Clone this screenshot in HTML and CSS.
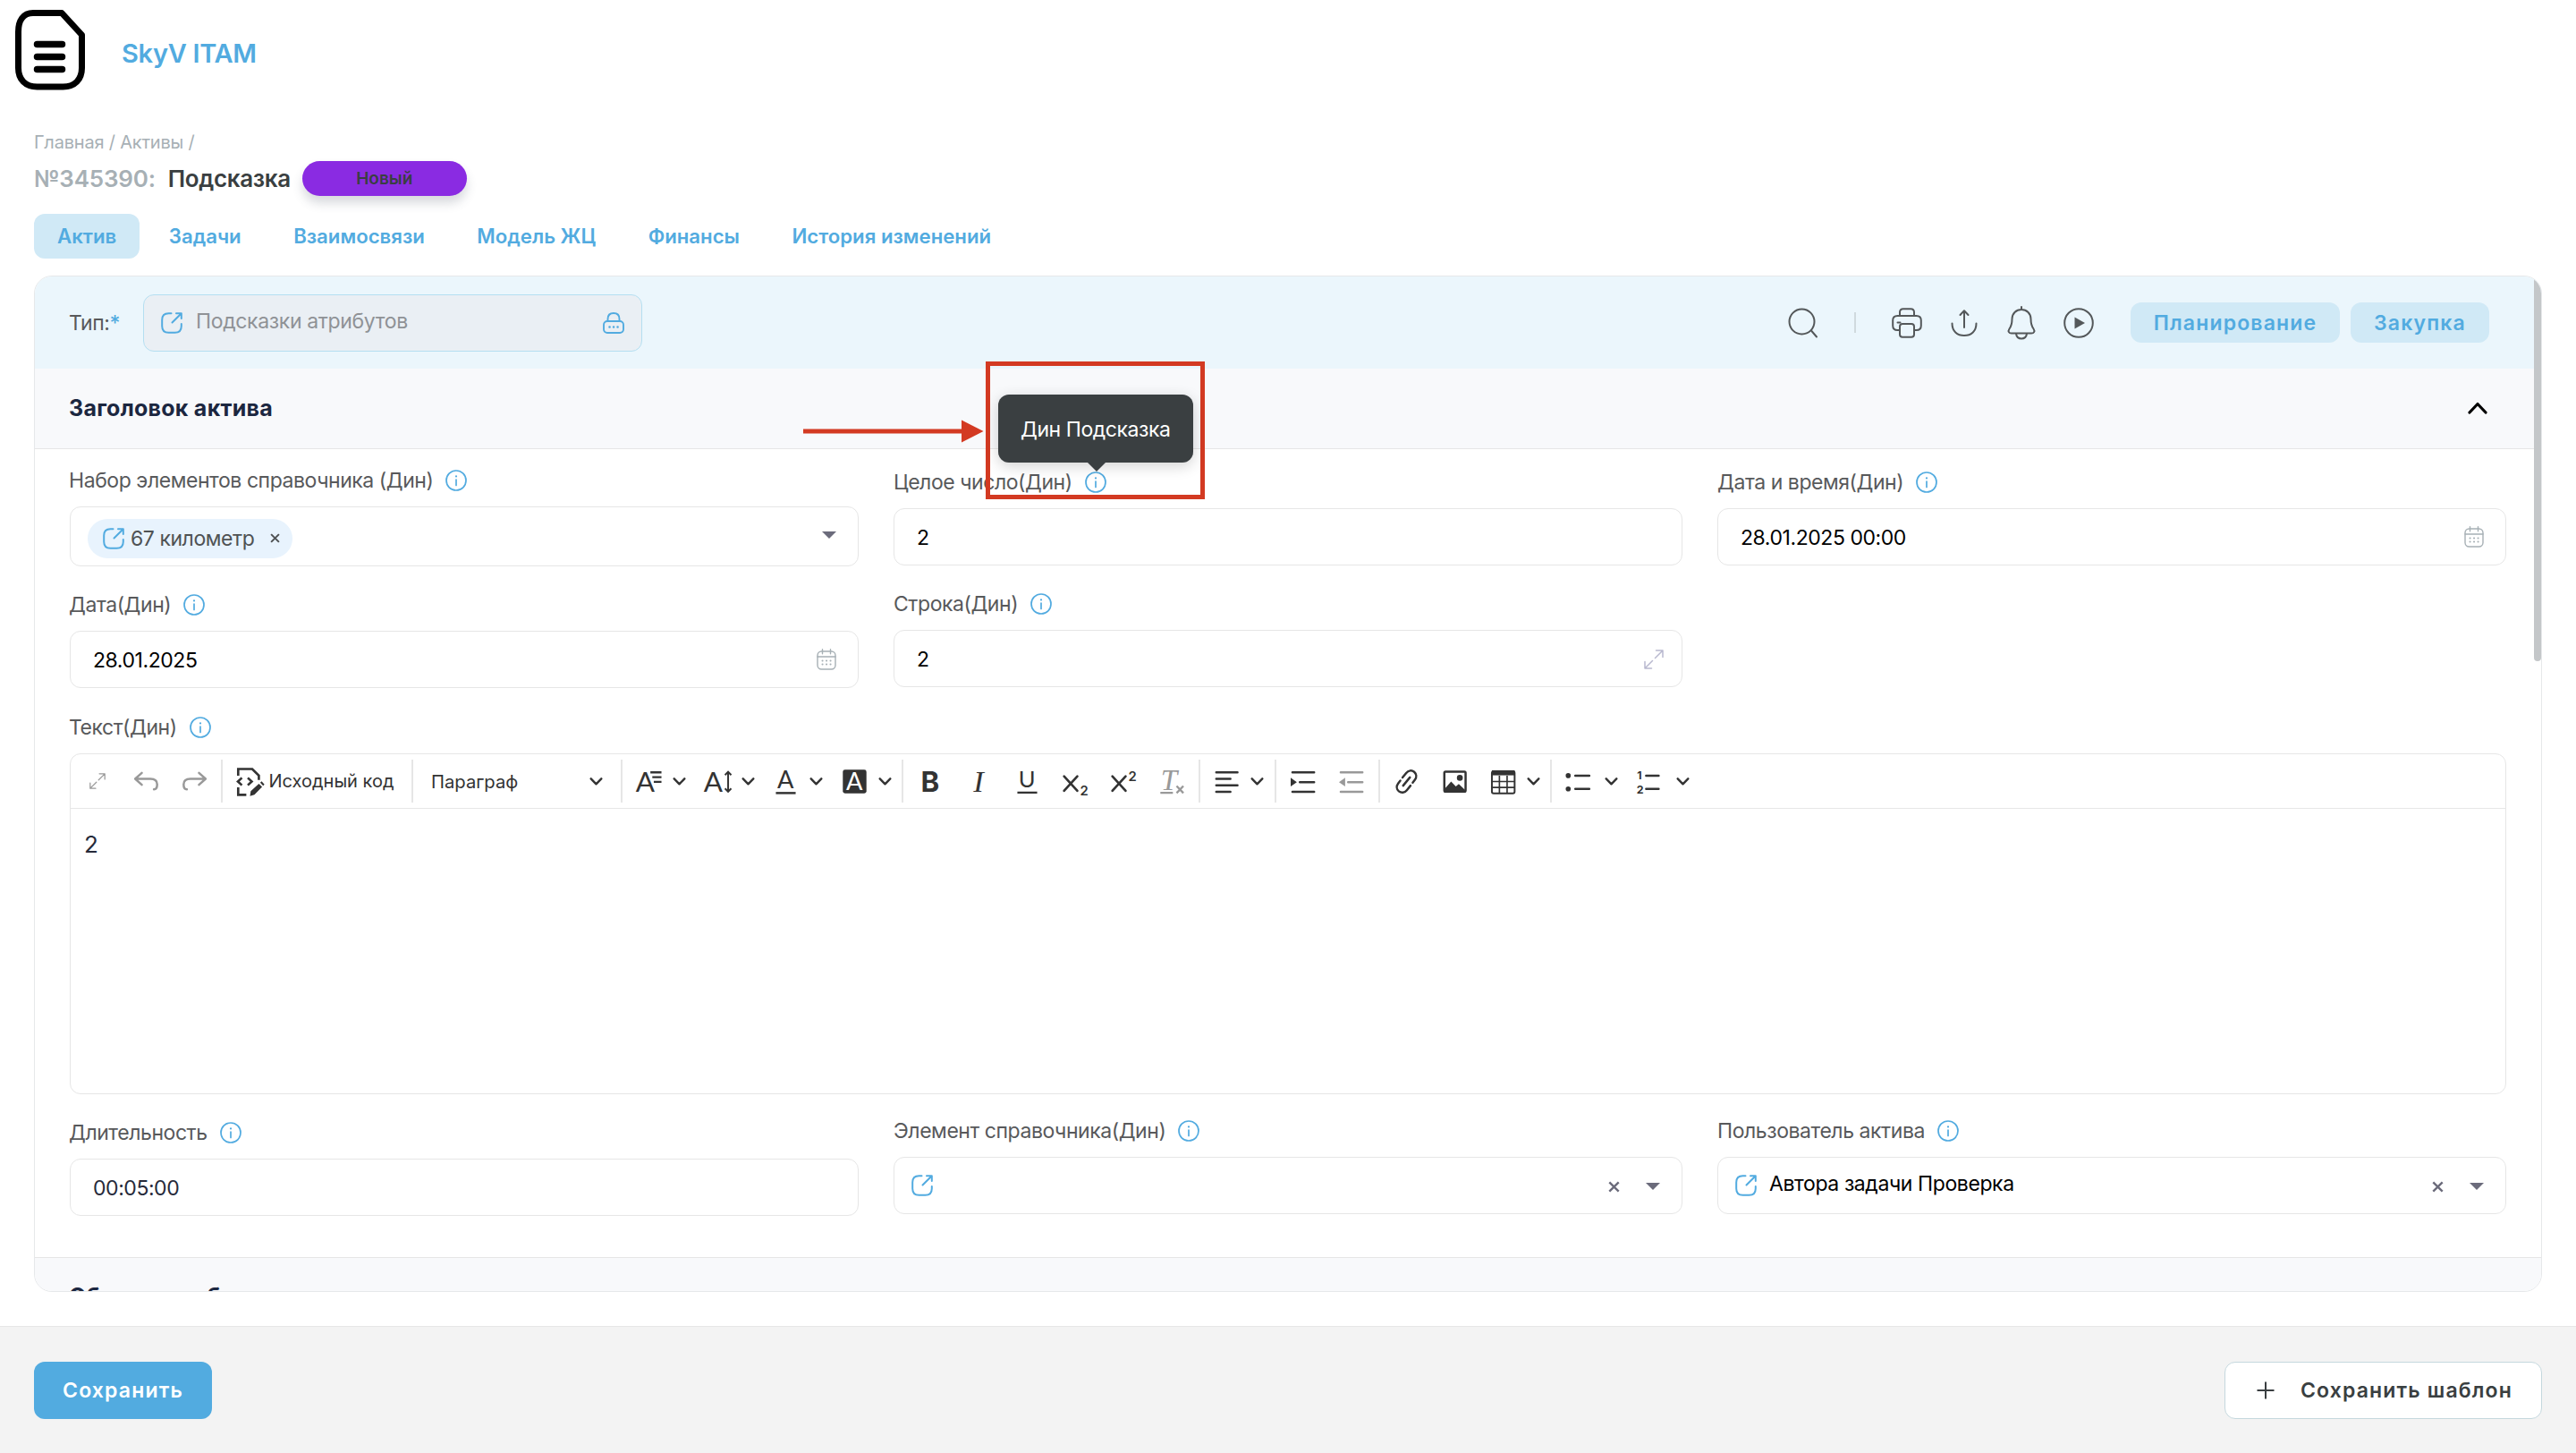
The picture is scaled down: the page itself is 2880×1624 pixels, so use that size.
FILE: index.html
```html
<!DOCTYPE html>
<html lang="ru">
<head>
  <meta charset="UTF-8" />
  <meta name="viewport" content="width=device-width, initial-scale=1.0">
  <title>SkyV ITAM | Подсказка</title>
  <link rel="stylesheet" href="styles.css">
</head>
<body>
  <!-- shared icons -->
  <svg class="sprite" width="0" height="0">
    <symbol id="i-info" viewBox="0 0 24 24">
      <circle cx="12" cy="12" r="11" fill="none" stroke="currentColor" stroke-width="1.7"/>
      <path d="M12 11v6.4" stroke="currentColor" stroke-width="1.7" stroke-linecap="round"/>
      <circle cx="12" cy="7.4" r="1.1" fill="currentColor"/>
    </symbol>
    <symbol id="i-open" viewBox="0 0 24 24">
      <path d="M11.5 1.2H8.5C3.5 1.2 1.2 3.500 1.2 8.500v7c0 5 2.300 7.300 7.300 7.300h7c5 0 7.300-2.300 7.300-7.300V13M12.500 11.500L22.300 1.700M17 1.200h5.800V7" fill="none" stroke="currentColor" stroke-width="2" stroke-linecap="round" stroke-linejoin="round"/>
    </symbol>
    <symbol id="i-cal" viewBox="0 0 22 24">
      <rect x="1" y="3" width="20" height="20" rx="4.500" fill="none" stroke="currentColor" stroke-width="1.400"/>
      <path d="M6.500 .7v5M15.500 .7v5M1 9h20" stroke="currentColor" stroke-width="1.400" stroke-linecap="round"/>
      <path d="M6.500 13.500h.1M11 13.500h.1M15.500 13.500h.1M6.500 17.500h.1M11 17.500h.1M15.500 17.500h.1" stroke="currentColor" stroke-width="2" stroke-linecap="round"/>
    </symbol>
    <symbol id="i-expand" viewBox="0 0 22 22">
      <path d="M12.500 9.500L21 1M13.500 1H21v7.500M9.500 12.500L1 21M1 13.500V21h7.500" fill="none" stroke="currentColor" stroke-width="1.500" stroke-linecap="round" stroke-linejoin="round"/>
    </symbol>
    <symbol id="i-chev" viewBox="0 0 14 9">
      <path d="M1.200 1.300L7 7.300l5.800-6" fill="none" stroke="currentColor" stroke-width="2.400" stroke-linecap="round" stroke-linejoin="round"/>
    </symbol>
    <symbol id="i-x" viewBox="0 0 12 12">
      <path d="M1.200 1.200l9.600 9.600M10.800 1.200L1.200 10.800" stroke="currentColor" stroke-width="2.200"/>
    </symbol>
  </svg>

  <header class="topbar">
    <svg class="logo" viewBox="0 0 78 90">
      <path d="M20 3.500h32L74.500 28v37c0 13-8 21-21 21H24.500c-13 0-21-8-21-21V24.500C3.500 12 9 3.500 20 3.500z" fill="none" stroke="#000" stroke-width="7" stroke-linejoin="round"/>
      <path d="M24.500 38.500h28M24.500 52.500h28M24.500 66.500h28" stroke="#000" stroke-width="7.500" stroke-linecap="round"/>
    </svg>
    <span class="brand">SkyV ITAM</span>
  </header>

  <main class="page">
    <div class="breadcrumbs">Главная / Активы /</div>
    <div class="heading">
      <span class="number">№345390:</span>
      <h1>Подсказка</h1>
      <span class="status">Новый</span>
    </div>

    <nav class="tabs">
      <a class="tab active">Актив</a>
      <a class="tab">Задачи</a>
      <a class="tab">Взаимосвязи</a>
      <a class="tab">Модель ЖЦ</a>
      <a class="tab">Финансы</a>
      <a class="tab">История изменений</a>
    </nav>

    <div class="panel">
      <div class="panel-head">
        <span class="type-label">Тип:<b>*</b></span>
        <div class="type-input">
          <svg class="ico-open"><use href="#i-open"/></svg>
          <span>Подсказки атрибутов</span>
          <svg class="ico-lock" viewBox="0 0 24 24">
            <rect x="1" y="10" width="22" height="13" rx="4" fill="none" stroke="currentColor" stroke-width="1.900"/>
            <path d="M5.500 9.800V7.500C5.500 3.500 8 1 12 1s6.500 2.500 6.500 6.500v2.300" fill="none" stroke="currentColor" stroke-width="1.900"/>
            <path d="M7.500 16.500h.1M12 16.500h.1M16.500 16.500h.1" stroke="currentColor" stroke-width="2.500" stroke-linecap="round"/>
          </svg>
        </div>
        <div class="actions">
          <svg class="ico-search" viewBox="0 0 34 34"><circle cx="15.500" cy="15.500" r="14" fill="none" stroke="currentColor" stroke-width="2"/><path d="M26 25.500l6 7" stroke="currentColor" stroke-width="2" stroke-linecap="round"/></svg>
          <span class="divider"></span>
          <svg viewBox="0 0 34 34">
            <path d="M9 9V5c0-2.500 1.300-3.800 3.800-3.800h8.400C23.700 1.200 25 2.500 25 5v4M9 25H6.500C3 25 1.200 23.200 1.200 20v-6c0-3.200 1.800-5 5.300-5h21c3.500 0 5.300 1.800 5.300 5v6c0 3.200-1.800 5-5.300 5H25M6.500 16.500h3" fill="none" stroke="currentColor" stroke-width="2" stroke-linecap="round"/>
            <rect x="9" y="18" width="16" height="14.800" rx="3" fill="none" stroke="currentColor" stroke-width="2"/>
          </svg>
          <svg viewBox="0 0 34 34"><path d="M17 22V4M12.500 8L17 3.300 21.500 8M3.500 17.500C3.500 26 9 31 17 31s13.500-5 13.500-13.500" fill="none" stroke="currentColor" stroke-width="2" stroke-linecap="round" stroke-linejoin="round"/></svg>
          <svg class="ico-bell" viewBox="0 0 34 38"><path d="M17 1v3M17 4C11 4 6.500 8.500 6.500 14.500c0 5-.5 7.500-3 11C1.500 28.500 3 30.500 6 30.500h22c3 0 4.500-2 2.500-5-2.500-3.500-3-6-3-11C27.500 8.500 23 4 17 4zM11 31c.5 3.500 2.500 5.500 6 5.500s5.500-2 6-5.500" fill="none" stroke="currentColor" stroke-width="2" stroke-linecap="round"/></svg>
          <svg viewBox="0 0 34 34"><circle cx="17" cy="17" r="15.800" fill="none" stroke="currentColor" stroke-width="2"/><path d="M12.500 10.500l11.500 6.500-11.500 6.500z" fill="currentColor"/></svg>
        </div>
        <button class="btn-soft btn-plan">Планирование</button>
        <button class="btn-soft btn-buy">Закупка</button>
      </div>

      <div class="section-head">
        <h2>Заголовок актива</h2>
        <svg class="collapse" viewBox="0 0 22 14"><path d="M2 12l9-9.500 9 9.500" fill="none" stroke="#000" stroke-width="3.200" stroke-linecap="round" stroke-linejoin="round"/></svg>
      </div>

      <div class="section-body">
        <div class="cols">
          <div class="col col-first">
            <div class="field">
              <div class="label">Набор элементов справочника (Дин) <svg class="info"><use href="#i-info"/></svg></div>
              <div class="control control-multi">
                <span class="chip">
                  <svg class="ico-open"><use href="#i-open"/></svg>
                  <span>67 километр</span>
                  <svg class="chip-x"><use href="#i-x"/></svg>
                </span>
                <span class="caret"></span>
              </div>
            </div>
            <div class="field">
              <div class="label">Дата(Дин) <svg class="info"><use href="#i-info"/></svg></div>
              <div class="control"><span>28.01.2025</span><svg class="ico-cal"><use href="#i-cal"/></svg></div>
            </div>
          </div>
          <div class="col">
            <div class="field">
              <div class="label">Целое число(Дин)
                <span class="hint"><svg class="info"><use href="#i-info"/></svg><span class="tooltip">Дин Подсказка</span></span>
              </div>
              <div class="control"><span>2</span></div>
            </div>
            <div class="field">
              <div class="label">Строка(Дин) <svg class="info"><use href="#i-info"/></svg></div>
              <div class="control"><span>2</span><svg class="ico-expand"><use href="#i-expand"/></svg></div>
            </div>
          </div>
          <div class="col">
            <div class="field">
              <div class="label">Дата и время(Дин) <svg class="info"><use href="#i-info"/></svg></div>
              <div class="control"><span>28.01.2025 00:00</span><svg class="ico-cal"><use href="#i-cal"/></svg></div>
            </div>
          </div>
        </div>

        <div class="field field-text">
          <div class="label">Текст(Дин) <svg class="info"><use href="#i-info"/></svg></div>
          <div class="editor">
            <div class="toolbar">
              <span class="tool muted"><svg class="tool-expand"><use href="#i-expand"/></svg></span>
              <span class="tool muted"><svg viewBox="0 0 20 20"><path d="M7 4.200L2.500 8.200 7 12.200M2.800 8.200h10c3.200 0 4.600 1.500 4.600 3.800s-.9 3.300-2.200 3.300" fill="none" stroke="currentColor" stroke-width="1.500" stroke-linecap="round" stroke-linejoin="round"/></svg></span>
              <span class="tool muted"><svg viewBox="0 0 20 20"><path d="M13 4.200l4.500 4-4.500 4M17.200 8.200h-10c-3.200 0-4.600 1.500-4.600 3.800s.9 3.300 2.200 3.300" fill="none" stroke="currentColor" stroke-width="1.500" stroke-linecap="round" stroke-linejoin="round"/></svg></span>
              <i class="sep"></i>
              <span class="tool tool-source">
                <svg viewBox="0 0 20 20"><path d="M2 6V1.500h9.500L16 6v3M2 14v5h5.500M4.500 7.500L1.800 10l2.700 2.500M8.500 7.500l2.700 2.500-2.700 2.500" fill="none" stroke="currentColor" stroke-width="1.600"/><path d="M10.500 16.500l5.500-5 2.200 2.200-5.200 5.300-3 .8zM16.900 10.800l1-.9 1.900 2-.9 1z" fill="currentColor"/></svg>
                Исходный код
              </span>
              <i class="sep"></i>
              <span class="tool tool-heading">Параграф <svg class="chev"><use href="#i-chev"/></svg></span>
              <i class="sep"></i>
              <span class="tool drop"><svg viewBox="0 0 20 20"><text x="1" y="17" font-size="19">A</text><path d="M11 3.800h7.500M12.300 7h6.200M13.300 10.200h5.200" stroke="currentColor" stroke-width="1.400"/></svg><svg class="chev"><use href="#i-chev"/></svg></span>
              <span class="tool drop"><svg viewBox="0 0 20 20"><text x=".5" y="17" font-size="19">A</text><path d="M17 3.600v13M14.900 5.600L17 3.400l2.100 2.200M14.900 14.700l2.100 2.200 2.100-2.200" fill="none" stroke="currentColor" stroke-width="1.200"/></svg><svg class="chev"><use href="#i-chev"/></svg></span>
              <span class="tool drop"><svg viewBox="0 0 20 20"><text x="4.200" y="14.300" font-size="16.500">A</text><path d="M3.300 17.800h13.400" stroke="currentColor" stroke-width="1.500"/></svg><svg class="chev"><use href="#i-chev"/></svg></span>
              <span class="tool drop"><svg viewBox="0 0 20 20"><rect x="2" y="2" width="16" height="16" rx="1.500" fill="currentColor"/><text class="inverse" x="4.200" y="15.800" font-size="16.500">A</text></svg><svg class="chev"><use href="#i-chev"/></svg></span>
              <i class="sep"></i>
              <span class="tool"><svg viewBox="0 0 20 20"><text class="bold" x="3.400" y="17" font-size="19">B</text></svg></span>
              <span class="tool"><svg viewBox="0 0 20 20"><text class="serif-i" x="6.200" y="17" font-size="21">I</text></svg></span>
              <span class="tool"><svg viewBox="0 0 20 20"><text x="4.100" y="14" font-size="15.500">U</text><path d="M3.300 17.500h13.400" stroke="currentColor" stroke-width="1.400"/></svg></span>
              <span class="tool"><svg viewBox="0 0 20 20"><path d="M2.200 6.500l9 9.800M11.200 6.500l-9 9.800" stroke="currentColor" stroke-width="1.600" stroke-linecap="round"/><text class="small" x="13" y="19.300" font-size="9">2</text></svg></span>
              <span class="tool"><svg viewBox="0 0 20 20"><path d="M2.200 6.500l9 9.800M11.200 6.500l-9 9.800" stroke="currentColor" stroke-width="1.600" stroke-linecap="round"/><text class="small" x="13" y="9.800" font-size="9">2</text></svg></span>
              <span class="tool muted"><svg viewBox="0 0 20 20"><text class="serif-i" x="2.200" y="16" font-size="20">T</text><path d="M2 17.700h8.500M13 13l4.600 4.800M17.600 13L13 17.800" stroke="currentColor" stroke-width="1.400"/></svg></span>
              <i class="sep"></i>
              <span class="tool drop"><svg viewBox="0 0 20 20"><path d="M2.900 3.800h14.400M2.900 8.200h9.600M2.900 12.600h14.400M2.900 17h9.600" stroke="currentColor" stroke-width="1.500" stroke-linecap="round"/></svg><svg class="chev"><use href="#i-chev"/></svg></span>
              <i class="sep"></i>
              <span class="tool"><svg viewBox="0 0 20 20"><path d="M3 3.800h14.700M8 10.400h9.700M3 17h14.700" stroke="currentColor" stroke-width="1.500" stroke-linecap="round"/><path d="M1.800 7.400l4.200 3-4.200 3z" fill="currentColor"/></svg></span>
              <span class="tool muted"><svg viewBox="0 0 20 20"><path d="M3 3.800h14.700M8 10.400h9.700M3 17h14.700" stroke="currentColor" stroke-width="1.500" stroke-linecap="round"/><path d="M6 7.400l-4.200 3 4.200 3z" fill="currentColor"/></svg></span>
              <i class="sep"></i>
              <span class="tool"><svg viewBox="0 0 20 20"><path d="M7.300 7.300L9.800 4.200c1.500-1.900 3.800-2 5.400-.7 1.600 1.400 1.800 3.600.5 5.300l-1.500 1.900M12.700 12.800l-2.500 3.100c-1.500 1.900-3.800 2-5.400.7-1.600-1.400-1.800-3.600-.5-5.300l1.500-1.900M7.700 12.800l4.600-5.600" fill="none" stroke="currentColor" stroke-width="1.500" stroke-linecap="round"/></svg></span>
              <span class="tool"><svg viewBox="0 0 20 20"><rect x="2.900" y="3.300" width="14.400" height="13.600" rx=".8" fill="none" stroke="currentColor" stroke-width="1.500"/><path d="M3.500 14.500l4-4.500 3.200 3.400 2-1.700 4.300 4V17H3.500z" fill="currentColor"/><circle cx="13.400" cy="7.500" r="2" fill="currentColor"/></svg></span>
              <span class="tool drop"><svg viewBox="0 0 20 20"><rect x="2.400" y="3" width="15.400" height="15" rx="1.200" fill="none" stroke="currentColor" stroke-width="1.200"/><path d="M2.400 2.400h15.400v3.400H2.400z" fill="currentColor"/><path d="M2.400 10h15.400M2.400 14h15.400M7.500 6v12M12.700 6v12" stroke="currentColor" stroke-width="1"/></svg><svg class="chev"><use href="#i-chev"/></svg></span>
              <i class="sep"></i>
              <span class="tool drop list"><svg viewBox="0 0 20 20"><path d="M8 6h9.500M8 15h9.500" stroke="currentColor" stroke-width="1.500" stroke-linecap="round"/><circle cx="3.200" cy="6" r="1.700" fill="currentColor"/><circle cx="3.200" cy="15" r="1.700" fill="currentColor"/></svg><svg class="chev"><use href="#i-chev"/></svg></span>
              <span class="tool drop list"><svg viewBox="0 0 20 20"><path d="M7.500 6H16M7.500 15H16" stroke="currentColor" stroke-width="1.500" stroke-linecap="round"/><text class="bold" x="1.400" y="8.500" font-size="7.500">1</text><text class="bold" x="1" y="18.300" font-size="7.500">2</text></svg><svg class="chev"><use href="#i-chev"/></svg></span>
            </div>
            <div class="editor-body">2</div>
          </div>
        </div>

        <div class="cols cols-last">
          <div class="col col-first">
            <div class="field">
              <div class="label">Длительность <svg class="info"><use href="#i-info"/></svg></div>
              <div class="control dark"><span>00:05:00</span></div>
            </div>
          </div>
          <div class="col">
            <div class="field">
              <div class="label">Элемент справочника(Дин) <svg class="info"><use href="#i-info"/></svg></div>
              <div class="control control-select">
                <svg class="ico-open"><use href="#i-open"/></svg>
                <svg class="clear"><use href="#i-x"/></svg><span class="caret"></span>
              </div>
            </div>
          </div>
          <div class="col">
            <div class="field">
              <div class="label">Пользователь актива <svg class="info"><use href="#i-info"/></svg></div>
              <div class="control control-select">
                <svg class="ico-open"><use href="#i-open"/></svg>
                <span class="value">Автора задачи Проверка</span>
                <svg class="clear"><use href="#i-x"/></svg><span class="caret"></span>
              </div>
            </div>
          </div>
        </div>
      </div>

      <div class="section-head next">
        <h2>Общие атрибуты</h2>
      </div>
      <span class="scrollbar"></span>
    </div>
  </main>

  <footer class="footer">
    <button class="btn-save">Сохранить</button>
    <button class="btn-template">
      <svg viewBox="0 0 20 20"><path d="M10 .5v19M.5 10h19" stroke="currentColor" stroke-width="2"/></svg>
      Сохранить шаблон
    </button>
  </footer>

  <!-- callout over the form -->
  <div class="callout-box"></div>
  <svg class="callout-arrow" viewBox="0 0 202 26"><path d="M0 10.500h178v5H0z"/><path d="M177 .5L201.500 13 177 25.500z"/></svg>
</body>
</html>
```
FILE: styles.css
```css
* {
  box-sizing: border-box;
}

body {
  margin: 0;
  width: 2880px;
  height: 1624px;
  position: relative;
  display: flex;
  flex-direction: column;
  overflow: hidden;
  background: #fff;
  color: #000;
  font-family: Inter, "Liberation Sans", sans-serif;
  font-size: 23px;
  letter-spacing: -0.44px;
}

h1,
h2 {
  margin: 0;
}

svg {
  display: block;
  flex: none;
}

.sprite {
  position: absolute;
}

.topbar {
  height: 120px;
  padding: 11px 0 0 17px;
  display: flex;
  align-items: flex-start;
}

.logo {
  width: 78px;
  height: 90px;
}

.brand {
  margin-left: 41px;
  line-height: 98px;
  height: 98px;
  font-size: 29px;
  font-weight: 600;
  letter-spacing: -0.3px;
  color: #52abe0;
}

.page {
  flex: none;
  height: 1362px;
  padding: 24px 38px 0;
}

.breadcrumbs {
  height: 30px;
  line-height: 30px;
  font-size: 20px;
  letter-spacing: -0.2px;
  color: #a7b0b5;
}

.heading {
  display: flex;
  align-items: center;
  height: 50px;
  font-size: 26px;
  font-weight: 600;
}

.number {
  color: #a7b0b5;
  letter-spacing: -0.2px;
}

h1 {
  margin-left: 14px;
  font-size: 26px;
  font-weight: 600;
  letter-spacing: -0.35px;
  color: #3a3f41;
}

.status {
  width: 184px;
  height: 39px;
  margin-left: 13px;
  line-height: 39px;
  text-align: center;
  border-radius: 20px;
  background: #8a2be2;
  color: #3a3f41;
  font-size: 19px;
  letter-spacing: 0;
  box-shadow: 0 8px 12px rgba(60, 70, 90, 0.2);
}

.tabs {
  display: flex;
  gap: 6.5px;
  margin-top: 15px;
}

.tab {
  height: 50px;
  padding: 0 26px;
  line-height: 50px;
  border-radius: 12px;
  font-size: 22.2px;
  letter-spacing: 0;
  font-weight: 600;
  color: #52abe0;
}

.tab.active {
  background: #d0e9f6;
}

.panel {
  position: relative;
  height: 1136px;
  margin-top: 19px;
  border: 1px solid #e6e8ea;
  border-radius: 20px;
  overflow: hidden;
}

.panel-head {
  display: flex;
  align-items: center;
  height: 103px;
  padding: 0 58px 0 38px;
  background: #ebf6fc;
}

.type-label {
  width: 83px;
  color: #58595b;
}

.type-label b {
  color: #52abe0;
  font-weight: 500;
}

.type-input {
  display: flex;
  align-items: center;
  width: 558px;
  height: 64px;
  padding: 0 19px;
  border: 1px solid #b4dff1;
  border-radius: 12px;
  background: #eaeff4;
  color: #8f9296;
  letter-spacing: -0.35px;
}

.type-input span {
  flex: 1;
  margin: -4px 0 0 15px;
}

.ico-open {
  width: 24px;
  height: 24px;
  color: #52abe0;
}

.ico-lock {
  width: 24px;
  height: 24px;
  color: #52abe0;
}

.actions {
  display: flex;
  align-items: center;
  gap: 30px;
  margin-left: auto;
  margin-right: 41px;
  color: #54585a;
}

.actions svg {
  width: 34px;
  height: 34px;
}

.actions .ico-bell {
  height: 38px;
}

.divider {
  width: 2px;
  height: 23px;
  margin: 0 10px;
  background: #d0dade;
}

button {
  font-family: inherit;
  font-weight: 600;
  border: 0;
  letter-spacing: 1.15px;
}

.btn-soft {
  height: 45px;
  padding: 0;
  border-radius: 12px;
  background: #d0e9f6;
  color: #52abe0;
  font-size: 23px;
}

.btn-plan {
  width: 234px;
}

.btn-buy {
  width: 155px;
  margin-left: 12px;
}

.section-head {
  display: flex;
  align-items: center;
  justify-content: space-between;
  height: 90px;
  padding: 0 60px 2px 38px;
  background: #f8f9fb;
  border-bottom: 1px solid #e6e6e6;
}

.section-head.next {
  margin-top: 46px;
  border-top: 1px solid #e6e6e6;
}

h2 {
  font-size: 25px;
  font-weight: 700;
  letter-spacing: 0.25px;
  color: #1c2740;
}

.collapse {
  width: 22px;
  height: 14px;
}

.section-body {
  padding: 19px 39px 0;
}

.cols {
  display: grid;
  grid-template-columns: repeat(3, 882px);
  column-gap: 39px;
}

.col {
  display: flex;
  flex-direction: column;
  gap: 27px;
  padding-top: 2px;
}

.col-first {
  padding-top: 0;
}

.label {
  display: flex;
  align-items: center;
  gap: 14px;
  height: 32px;
  margin-bottom: 13px;
  color: #58595b;
  white-space: nowrap;
}

.col-first .label,
.field-text .label {
  margin-left: -1px;
}

.info {
  width: 24px;
  height: 24px;
  color: #52abe0;
}

.control {
  display: flex;
  align-items: center;
  justify-content: space-between;
  height: 64px;
  padding: 1px 24px 0 25px;
  border: 1px solid #e6e6e6;
  border-radius: 12px;
}

.control.dark {
  color: #262a3a;
}

.control-multi {
  height: 67px;
  padding-top: 0;
  padding-left: 19px;
}

.chip {
  display: flex;
  align-items: center;
  height: 44px;
  margin-top: 4px;
  padding: 0 14px 0 17px;
  border-radius: 22px;
  background: #e8f3fd;
  color: #4f5254;
}

.chip span {
  margin: 0 18px 0 7px;
}

.chip-x {
  width: 11px;
  height: 11px;
}

.caret {
  border: 8px solid transparent;
  border-top-color: #6b6b7b;
  border-bottom: 0;
}

.control-multi .caret {
  margin-top: -4px;
}

.ico-cal {
  width: 22px;
  height: 24px;
  margin-top: -1px;
  color: #a7b0b5;
}

.ico-expand {
  width: 22px;
  height: 22px;
  margin-right: -4px;
  color: #b9b9cf;
}

.control-select {
  justify-content: flex-start;
  padding-top: 0;
  padding-left: 19px;
}

.value {
  margin: -4px 0 0 14px;
  letter-spacing: -0.4px;
}

.clear {
  width: 13px;
  height: 13px;
  margin: 3px 29px 0 auto;
  color: #6b6b7b;
}

.control-select .caret {
  margin-top: 1px;
}

.field-text {
  margin-top: 28px;
}

.editor {
  height: 381px;
  border: 1px solid #e6e6e6;
  border-radius: 12px;
}

.toolbar {
  display: flex;
  align-items: center;
  height: 61px;
  padding-left: 3px;
  border-bottom: 1px solid #e6e6e6;
  color: #333;
  font-size: 20px;
  letter-spacing: 0;
}

.tool {
  display: flex;
  align-items: center;
  justify-content: center;
  width: 54px;
}

.tool svg {
  width: 33px;
  height: 33px;
  overflow: visible;
}

.tool text {
  fill: currentColor;
  font-family: Lato, "Liberation Sans", sans-serif;
}

.tool text.inverse {
  fill: #fff;
}

.tool text.bold {
  font-family: Inter, sans-serif;
  font-weight: 700;
}

.tool text.small {
  font-family: Inter, sans-serif;
  font-weight: 600;
}

.tool text.serif-i {
  font-family: "Liberation Serif", serif;
  font-style: italic;
}

.tool .tool-expand {
  width: 18px;
  height: 18px;
}

.tool .chev {
  width: 15px;
  height: 9px;
}

.muted {
  color: #999;
}

.tool-source {
  width: 205px;
  padding-right: 5px;
  gap: 4px;
}

.tool-heading {
  width: 226px;
  padding: 0 17px 0 17px;
  justify-content: space-between;
  font-size: 20.2px;
}

.tool.drop {
  width: 76.5px;
  padding-left: 10px;
  justify-content: flex-start;
  gap: 10px;
}

.tool.list {
  width: 79.5px;
  gap: 13px;
}

.sep {
  width: 2px;
  height: 48px;
  margin: 0 3px;
  background: #e6e6e6;
}

.editor-body {
  padding: 22px 15px;
  font-size: 26px;
  line-height: 36px;
  color: #262a3a;
}

.cols-last {
  margin-top: 25px;
}

.cols-last .col {
  padding-top: 0;
}

.cols-last .col-first {
  padding-top: 2px;
}

.hint {
  position: relative;
}

.tooltip {
  position: absolute;
  z-index: 2;
  left: -97px;
  bottom: 34px;
  width: 218px;
  height: 76px;
  line-height: 78px;
  text-align: center;
  border-radius: 12px;
  background: #3a3f41;
  color: #fff;
  box-shadow: 0 4px 16px rgba(0, 0, 0, 0.18);
}

.tooltip::after {
  content: "";
  position: absolute;
  top: 76px;
  left: 100px;
  border: 10px solid transparent;
  border-top-color: #3a3f41;
  border-bottom: 0;
}

.scrollbar {
  position: absolute;
  top: 0;
  right: 0;
  width: 8px;
  height: 430px;
  border-radius: 0 0 4px 4px;
  background: #c4c7c9;
}

.footer {
  display: flex;
  align-items: center;
  justify-content: space-between;
  height: 142px;
  padding: 1px 38px 0;
  background: #f3f3f3;
  border-top: 1px solid #e6e6e6;
}

.btn-save,
.btn-template {
  height: 64px;
  border-radius: 12px;
  font-size: 23px;
}

.btn-save {
  width: 199px;
  padding: 0;
  background: #52abe0;
  color: #fff;
}

.btn-template {
  display: flex;
  align-items: center;
  gap: 29px;
  padding: 0 32px 0 35px;
  border: 1px solid #c5d8de;
  background: #fff;
  color: #3a3f41;
}

.btn-template svg {
  width: 20px;
  height: 20px;
}

.callout-box {
  position: absolute;
  left: 1102px;
  top: 404px;
  width: 245px;
  height: 154px;
  border: 5px solid #d33a22;
}

.callout-arrow {
  position: absolute;
  left: 898px;
  top: 469px;
  width: 202px;
  height: 26px;
  fill: #d33a22;
}
```
